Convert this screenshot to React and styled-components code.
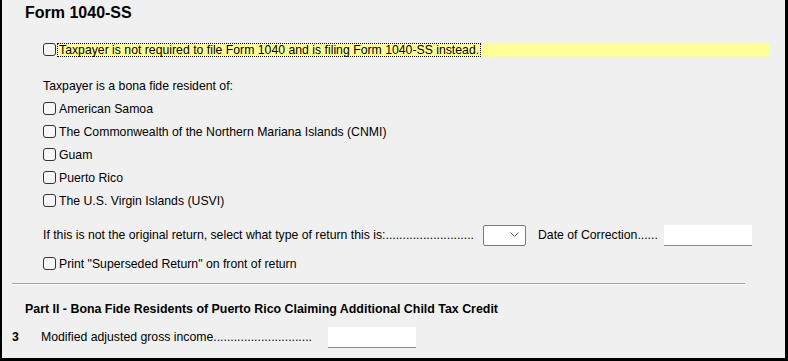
import React from 'react';
import styled, { createGlobalStyle } from 'styled-components';

const GlobalStyle = createGlobalStyle`
  html, body {
    margin: 0;
    padding: 0;
    background: #f0f0f0;
  }
  * {
    box-sizing: border-box;
  }
`;

const Frame = styled.div`
  width: 788px;
  height: 361px;
  background: #f0f0f0;
  border-left: 2px solid #000;
  border-right: 3px solid #000;
  border-bottom: 3px solid #000;
  overflow: hidden;
  font-family: 'Liberation Sans', Arial, sans-serif;
  font-size: 12.25px;
  color: #000;
  display: flex;
  flex-direction: column;
`;

const Title = styled.h1`
  margin: 0;
  height: 38px;
  padding: 3px 0 0 23px;
  font-size: 16px;
  font-weight: bold;
  line-height: 20px;
  color: #000;
`;

const Row = styled.div`
  display: flex;
  align-items: center;
  height: ${p => p.$h || 23}px;
  margin-top: ${p => p.$mt || 0}px;
  padding-left: ${p => p.$indent ?? 41}px;
  padding-right: ${p => p.$right || 0}px;
`;

const Box = styled.span`
  flex: none;
  width: 13px;
  height: 13px;
  border: 1px solid #333;
  border-radius: 3px;
  background: #f7f7f7;
  margin-right: 3px;
`;

const Label = styled.span`
  white-space: nowrap;
  line-height: 14px;
`;

const Highlight = styled.div`
  flex: 1;
  height: 14px;
  background: #ffff99;
  display: flex;
  align-items: center;
  margin-left: -2px;
`;

const Focused = styled.span`
  white-space: nowrap;
  line-height: 12px;
  padding: 0 1px;
  border: 1px dotted #000;
`;

const Leader = styled.span`
  width: ${p => p.$w}px;
  flex: none;
  white-space: nowrap;
  line-height: 14px;
`;

const Select = styled.div`
  width: 43px;
  height: 21px;
  background: #fff;
  border: 1px solid #7a7a7a;
  border-radius: 2px;
  display: flex;
  align-items: center;
  justify-content: flex-end;
  padding-right: 6px;
`;

const Field = styled.div`
  width: 88px;
  height: 21px;
  background: #fff;
  border-bottom: 1px solid #8a8a8a;
`;

const Divider = styled.hr`
  margin: 8px 0 0 10px;
  width: 733px;
  height: 2px;
  border: 0;
  border-top: 1px solid #a0a0a0;
  border-bottom: 1px solid #fff;
`;

const PartTitle = styled.h2`
  margin: 0;
  font-size: 12.4px;
  font-weight: bold;
  line-height: 16px;
`;

const LineNo = styled.span`
  width: 29px;
  flex: none;
  font-weight: bold;
`;

const Chevron = () => (
  <svg width="9" height="6" viewBox="0 0 9 6">
    <polyline points="0.5,0.5 4.5,4.5 8.5,0.5" fill="none" stroke="#555" strokeWidth="1" />
  </svg>
);

const islands = [
  'American Samoa',
  'The Commonwealth of the Northern Mariana Islands (CNMI)',
  'Guam',
  'Puerto Rico',
  'The U.S. Virgin Islands (USVI)',
];

const dots = n => '.'.repeat(n);

export default function App() {
  return (
    <>
      <GlobalStyle />
      <Frame>
        <Title>Form 1040-SS</Title>

        <Row $right={15}>
          <Box />
          <Highlight>
            <Focused>Taxpayer is not required to file Form 1040 and is filing Form 1040-SS instead.</Focused>
          </Highlight>
        </Row>

        <Row $mt={13}>
          <Label>Taxpayer is a bona fide resident of:</Label>
        </Row>
        {islands.map(name => (
          <Row key={name}>
            <Box />
            <Label>{name}</Label>
          </Row>
        ))}

        <Row $mt={11} $h={24}>
          <Leader $w={440}>If this is not the original return, select what type of return this is:{dots(26)}</Leader>
          <Select>
            <Chevron />
          </Select>
          <Leader $w={126} style={{ marginLeft: 12 }}>Date of Correction{dots(6)}</Leader>
          <Field />
        </Row>

        <Row $mt={5}>
          <Box />
          <Label>Print "Superseded Return" on front of return</Label>
        </Row>

        <Divider />

        <Row $mt={12} $h={24} $indent={23}>
          <PartTitle>Part II - Bona Fide Residents of Puerto Rico Claiming Additional Child Tax Credit</PartTitle>
        </Row>

        <Row $mt={5} $h={22} $indent={10}>
          <LineNo>3</LineNo>
          <Leader $w={287}>Modified adjusted gross income{dots(29)}</Leader>
          <Field />
        </Row>
      </Frame>
    </>
  );
}
